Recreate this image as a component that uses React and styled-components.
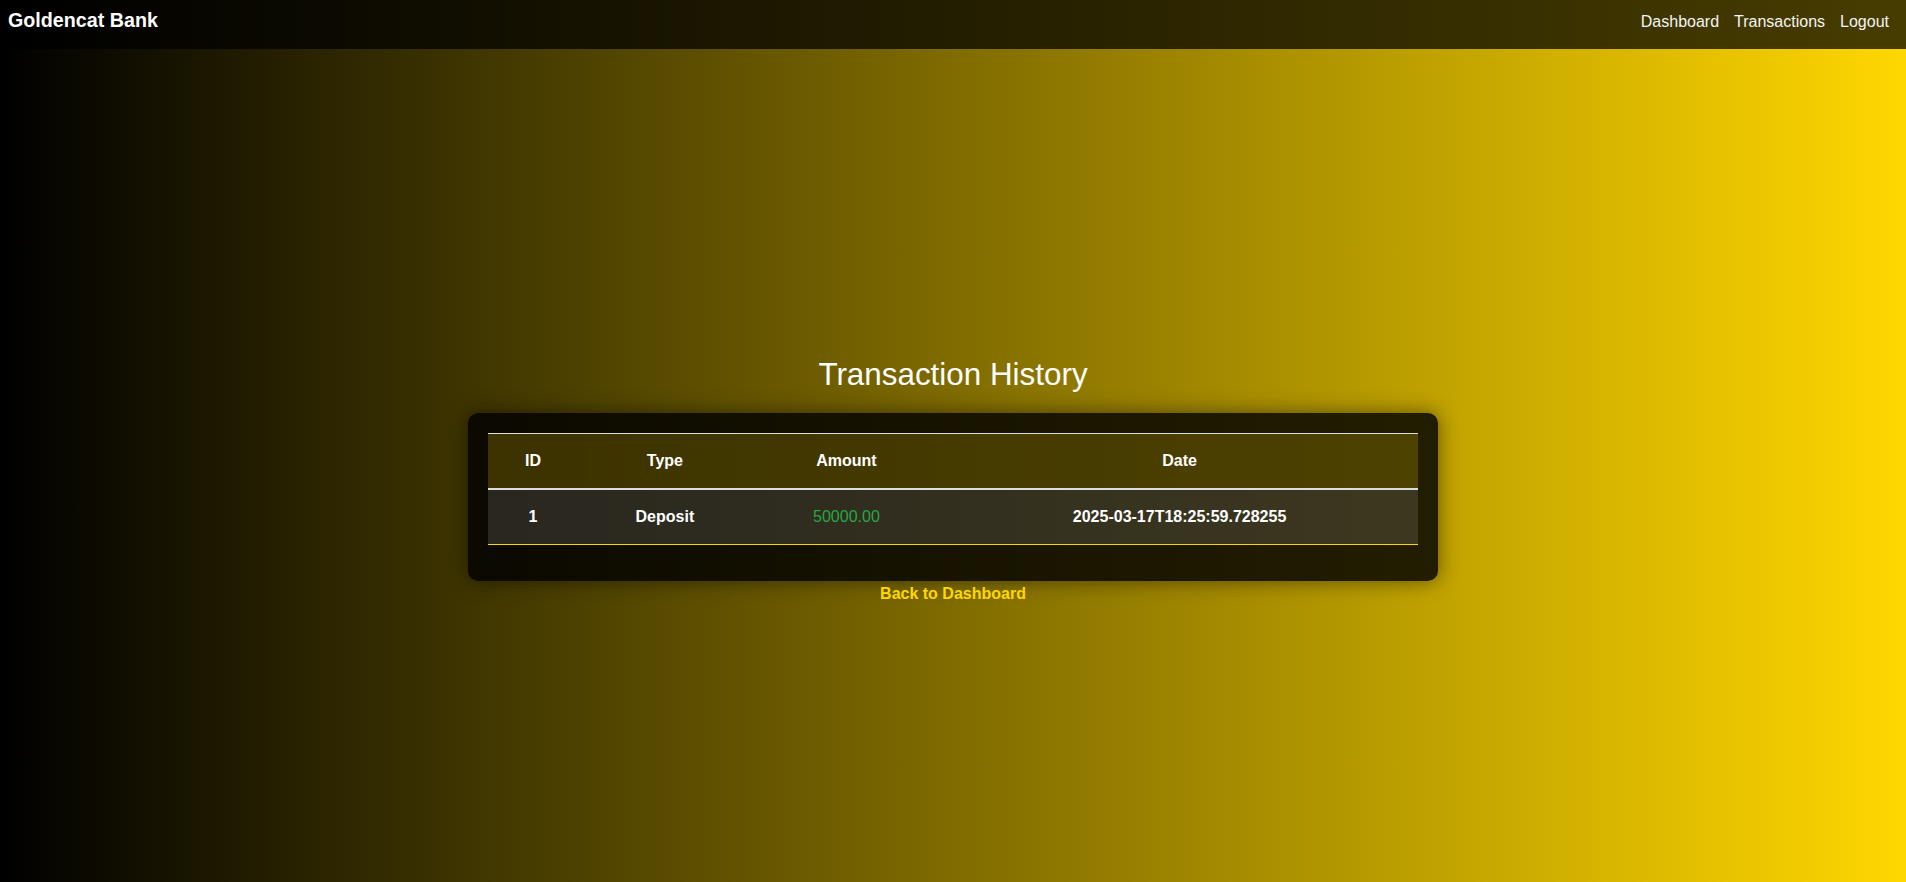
import React from 'react';
import styled, { createGlobalStyle } from 'styled-components';

const GlobalStyle = createGlobalStyle`
  html, body {
    margin: 0;
    padding: 0;
  }

  body {
    min-height: 100vh;
    font-family: "Liberation Sans", Arial, sans-serif;
    color: #fff;
    background: linear-gradient(to right, #000000, #ffd700);
  }

  * {
    box-sizing: border-box;
  }
`;

const transactions = [
  { id: 1, type: 'Deposit', amount: '50000.00', date: '2025-03-17T18:25:59.728255' },
];

const App = () => {
  return (
    <>
      <GlobalStyle />
      <Navbar>
        <Brand href="#">Goldencat Bank</Brand>
        <NavLinks>
          <NavLink href="#">Dashboard</NavLink>
          <NavLink href="#">Transactions</NavLink>
          <NavLink href="#">Logout</NavLink>
        </NavLinks>
      </Navbar>

      <Main>
        <Title>Transaction History</Title>
        <Card>
          <Table>
            <thead>
              <tr>
                <Th>ID</Th>
                <Th>Type</Th>
                <Th>Amount</Th>
                <Th>Date</Th>
              </tr>
            </thead>
            <tbody>
              { transactions.map( tx => (
                <Row key={ tx.id }>
                  <Td>{ tx.id }</Td>
                  <Td>{ tx.type }</Td>
                  <Td $amount>{ tx.amount }</Td>
                  <Td>{ tx.date }</Td>
                </Row>
              )) }
            </tbody>
          </Table>
        </Card>
        <BackLink href="#">Back to Dashboard</BackLink>
      </Main>
    </>
  )
};

const Navbar = styled.nav`
  display: flex;
  justify-content: space-between;
  align-items: baseline;
  height: 49px;
  padding: 9px 17px 0 8px;
  background: rgba(0, 0, 0, 0.72);
`;

const Brand = styled.a`
  color: #fff;
  font-size: 19.7px;
  font-weight: bold;
  text-decoration: none;
  line-height: normal;
`;

const NavLinks = styled.div`
  display: flex;
  align-items: baseline;
  gap: 15px;
`;

const NavLink = styled.a`
  color: #f4f4f4;
  font-size: 16px;
  text-decoration: none;
  line-height: normal;
`;

const Main = styled.main`
  display: flex;
  flex-direction: column;
  align-items: center;
  padding-top: 308px;
`;

const Title = styled.h2`
  margin: 0 0 20px;
  font-size: 31.4px;
  font-weight: normal;
  line-height: normal;
  color: #fff;
`;

const Card = styled.div`
  width: 970px;
  padding: 20px 20px 36px;
  border-radius: 10px;
  background: rgba(0, 0, 0, 0.82);
  box-shadow: 0 0 20px rgba(0, 0, 0, 0.5);
`;

const Table = styled.table`
  width: 100%;
  border-collapse: separate;
  border-spacing: 0;
  font-size: 16px;
  line-height: 24px;
`;

const Th = styled.th`
  padding: 15px;
  text-align: center;
  font-weight: bold;
  color: #fff;
  background: rgba(255, 215, 0, 0.2);
  border-top: 1px solid #ddd;
  border-bottom: 2px solid #ddd;
`;

const Row = styled.tr`
  background: rgba(255, 255, 255, 0.12);
`;

const Td = styled.td`
  padding: 15px;
  text-align: center;
  font-weight: ${ p => p.$amount ? 'normal' : 'bold' };
  color: ${ p => p.$amount ? '#28a745' : '#fff' };
  border-bottom: 1px solid #ffd700;
`;

const BackLink = styled.a`
  margin-top: 1px;
  color: #ffd700;
  font-size: 16px;
  font-weight: bold;
  line-height: 24px;
  text-decoration: none;
`;

export default App;
